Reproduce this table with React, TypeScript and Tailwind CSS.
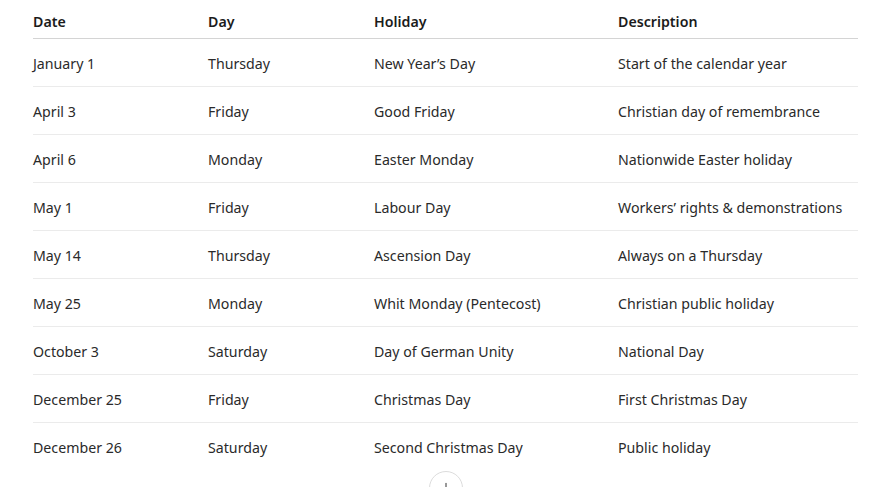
import { ArrowDown } from 'lucide-react';

const rows = [
  ['January 1', 'Thursday', 'New Year’s Day', 'Start of the calendar year'],
  ['April 3', 'Friday', 'Good Friday', 'Christian day of remembrance'],
  ['April 6', 'Monday', 'Easter Monday', 'Nationwide Easter holiday'],
  ['May 1', 'Friday', 'Labour Day', 'Workers’ rights & demonstrations'],
  ['May 14', 'Thursday', 'Ascension Day', 'Always on a Thursday'],
  ['May 25', 'Monday', 'Whit Monday (Pentecost)', 'Christian public holiday'],
  ['October 3', 'Saturday', 'Day of German Unity', 'National Day'],
  ['December 25', 'Friday', 'Christmas Day', 'First Christmas Day'],
  ['December 26', 'Saturday', 'Second Christmas Day', 'Public holiday'],
];

export default function App() {
  return (
    <div className="min-h-screen bg-white text-[#2a2a2a] font-['Noto_Sans',sans-serif] text-[14.2px]">
      <div className="px-[33px] w-[891px]">
        <table className="w-[825px] border-collapse table-fixed">
          <colgroup>
            <col className="w-[175px]" />
            <col className="w-[166px]" />
            <col className="w-[244px]" />
            <col />
          </colgroup>
          <thead>
            <tr className="border-b border-[#d4d4d4]">
              {['Date', 'Day', 'Holiday', 'Description'].map(h => (
                <th key={h} className="text-left font-semibold leading-6 pt-[10px] pb-[4px] px-0 text-[#1b1b1b]">{h}</th>
              ))}
            </tr>
          </thead>
          <tbody>
            {rows.map((r, i) => (
              <tr key={r[0]} className={i < rows.length - 1 ? 'border-b border-[#ebebeb]' : ''}>
                {r.map((c, j) => (
                  <td key={j} className="h-[48px] pt-[2px] pb-0 px-0 leading-6 whitespace-nowrap">{c}</td>
                ))}
              </tr>
            ))}
          </tbody>
        </table>
        <div className="w-[825px] flex justify-center">
          <button className="w-[34px] h-[34px] rounded-full border border-[#dcdcdc] bg-white flex items-center justify-center text-[#333]">
            <ArrowDown className="w-4 h-4" strokeWidth={1.5} />
          </button>
        </div>
      </div>
    </div>
  );
}
